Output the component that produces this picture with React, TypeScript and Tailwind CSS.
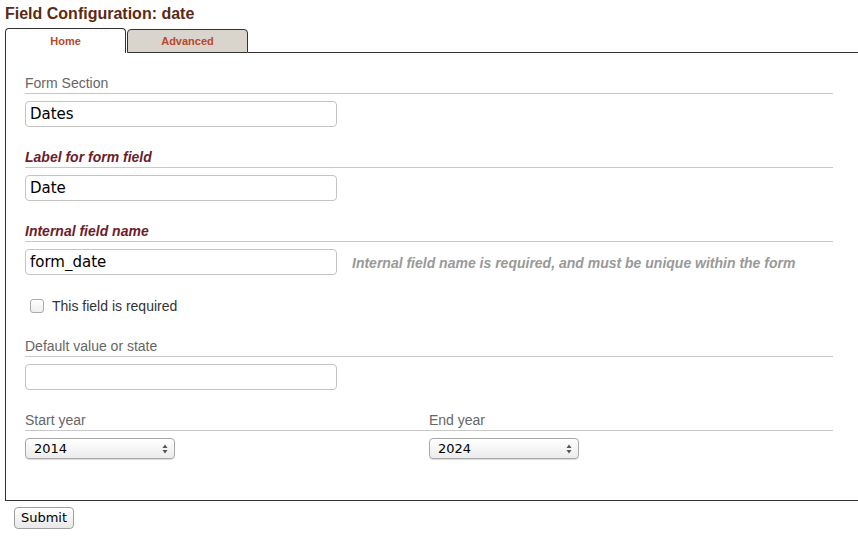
import React from "react";

const sans = "font-['Liberation_Sans',Arial,sans-serif]";
const inputFont = "font-['DejaVu_Sans','Noto_Sans',sans-serif]";

function SectionLabel({ children, strong = false }: { children: React.ReactNode; strong?: boolean }) {
  return (
    <div
      className={
        "border-b border-[#c8c8c8] pb-[2px] mr-[26px] text-[14px] leading-[16px] " +
        (strong ? "font-bold italic text-[#6e1c28]" : "text-[#666]")
      }
    >
      {children}
    </div>
  );
}

function TextBox({ value }: { value: string }) {
  return (
    <input
      readOnly
      value={value}
      className={`${inputFont} block w-[312px] h-[26px] rounded-[4px] border border-[#c4c4c4] bg-white px-[4px] text-[15px] text-black outline-none`}
    />
  );
}

function YearSelect({ value }: { value: string }) {
  return (
    <div className="relative w-[150px] h-[21px] rounded-[4px] border border-[#a8a8a8] bg-gradient-to-b from-white to-[#ececec] shadow-[0_1px_1px_rgba(0,0,0,0.15)]">
      <span className={`${inputFont} absolute left-[8px] top-[2px] text-[13px] leading-[16px] text-black`}>{value}</span>
      <svg className="absolute right-[6px] top-[5px]" width="6" height="10" viewBox="0 0 6 10" aria-hidden="true">
        <path d="M3 0.5 L5.5 4 H0.5 Z" fill="#555" />
        <path d="M3 9.5 L5.5 6 H0.5 Z" fill="#555" />
      </svg>
    </div>
  );
}

export default function App() {
  return (
    <div className={`${sans} w-[858px] h-[537px] bg-white overflow-hidden`}>
      <h1 className="pl-[5px] pt-[5px] text-[16px] font-bold leading-[18px] text-[#5b2a14]">
        Field Configuration: date
      </h1>

      {/* Tabs */}
      <div className="mt-[5px] flex items-end pl-[5px]">
        <div className="w-[121px] h-[25px] rounded-t-[4px] border border-b-0 border-[#333] bg-white flex justify-center pt-[6px] text-[11px] font-bold text-[#b8482a] leading-[12px]">
          Home
        </div>
        <div className="ml-[1px] flex flex-1 items-end">
          <div className="w-[121px] h-[24px] rounded-t-[4px] border border-[#333] bg-[#dad5cc] flex justify-center pt-[5px] text-[11px] font-bold text-[#b8482a] leading-[12px]">
            Advanced
          </div>
          <div className="flex-1 border-b border-[#333]" />
        </div>
      </div>

      {/* Panel */}
      <div className="ml-[5px] mr-[-2px] h-[448px] border border-t-0 border-[#333] pl-[19px] pt-[22px]">
        <SectionLabel>Form Section</SectionLabel>
        <div className="mt-[7px]">
          <TextBox value="Dates" />
        </div>

        <div className="mt-[22px]">
          <SectionLabel strong>Label for form field</SectionLabel>
        </div>
        <div className="mt-[7px]">
          <TextBox value="Date" />
        </div>

        <div className="mt-[22px]">
          <SectionLabel strong>Internal field name</SectionLabel>
        </div>
        <div className="mt-[7px] flex items-center">
          <TextBox value="form_date" />
          <span className="ml-[15px] mt-[2px] text-[14px] font-bold italic text-[#999] leading-[16px]">
            Internal field name is required, and must be unique within the form
          </span>
        </div>

        <label className="mt-[23px] ml-[5px] flex h-[16px] items-center">
          <span className="inline-block w-[14px] h-[14px] rounded-[3px] border border-[#aaa] bg-gradient-to-b from-white to-[#eee]" />
          <span className="ml-[8px] text-[14px] text-[#333] leading-[16px]">This field is required</span>
        </label>

        <div className="mt-[24px]">
          <SectionLabel>Default value or state</SectionLabel>
        </div>
        <div className="mt-[7px]">
          <TextBox value="" />
        </div>

        <div className="mt-[22px] mr-[26px] flex border-b border-[#c8c8c8] pb-[2px] text-[14px] leading-[16px] text-[#666]">
          <span className="w-[404px]">Start year</span>
          <span>End year</span>
        </div>
        <div className="mt-[7px] flex">
          <div className="w-[404px]">
            <YearSelect value="2014" />
          </div>
          <YearSelect value="2024" />
        </div>
      </div>

      <div className="pl-[14px] pt-[6px]">
        <button
          className={`${inputFont} block h-[22px] w-[60px] rounded-[4px] border border-[#a0a0a0] bg-gradient-to-b from-white to-[#e8e8e8] text-[13px] text-black leading-[16px]`}
        >
          Submit
        </button>
      </div>
    </div>
  );
}
